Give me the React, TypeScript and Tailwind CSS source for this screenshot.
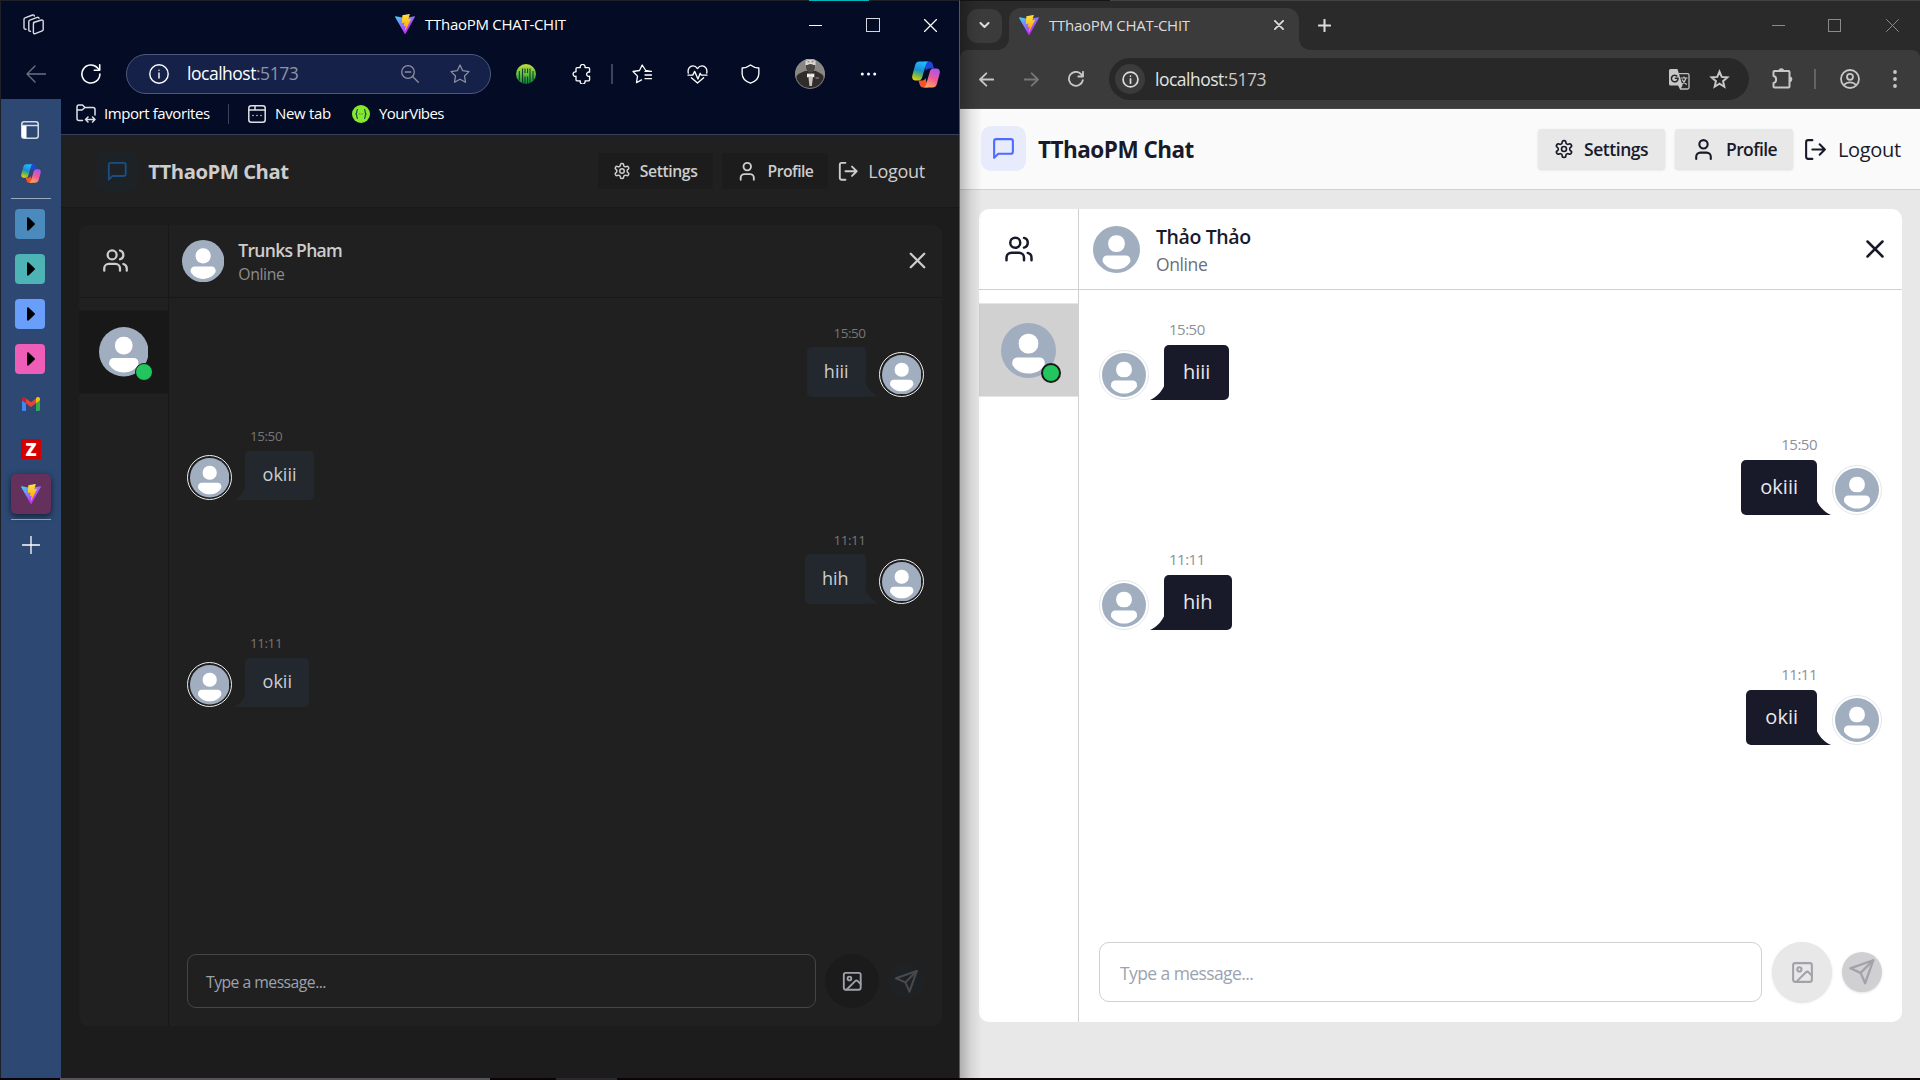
import React, { useId } from 'react';
import { Users, Image as ImageIcon, X, User } from 'lucide-react';

type IconProps = { className?: string; children?: React.ReactNode; box?: string; sw?: number };

const Line = ({ className = '', children, box = '0 0 20 20', sw = 1.2 }: IconProps) => (
  <svg viewBox={box} className={`shrink-0 ${className}`} fill="none" stroke="currentColor" strokeWidth={sw} strokeLinecap="round" strokeLinejoin="round">
    {children}
  </svg>
);

function ViteLogo({ className = '' }: { className?: string }) {
  const a = useId();
  const b = useId();
  return (
    <svg viewBox="0 0 256 257" className={`shrink-0 ${className}`}>
      <defs>
        <linearGradient id={a} x1="-.828%" x2="57.636%" y1="7.652%" y2="78.411%">
          <stop offset="0%" stopColor="#41D1FF" />
          <stop offset="100%" stopColor="#BD34FE" />
        </linearGradient>
        <linearGradient id={b} x1="43.376%" x2="50.316%" y1="2.242%" y2="89.03%">
          <stop offset="0%" stopColor="#FFEA83" />
          <stop offset="8.333%" stopColor="#FFDD35" />
          <stop offset="100%" stopColor="#FFA800" />
        </linearGradient>
      </defs>
      <path fill={`url(#${a})`} d="M255.153 37.938L134.897 252.976c-2.483 4.44-8.862 4.466-11.382.048L.875 37.958c-2.746-4.814 1.371-10.646 6.827-9.67l120.385 21.517a6.537 6.537 0 0 0 2.322-.004l117.867-21.483c5.438-.991 9.574 4.796 6.877 9.62Z" />
      <path fill={`url(#${b})`} d="M185.432.063L96.44 17.501a3.268 3.268 0 0 0-2.634 3.014l-5.474 92.456a3.268 3.268 0 0 0 3.997 3.378l24.777-5.718c2.318-.535 4.413 1.507 3.936 3.838l-7.361 36.047c-.495 2.426 1.782 4.5 4.151 3.78l15.304-4.649c2.372-.72 4.652 1.36 4.15 3.788l-11.698 56.621c-.732 3.542 3.979 5.473 5.943 2.437l1.313-2.028l72.516-144.72c1.215-2.423-.88-5.186-3.54-4.672l-25.505 4.922c-2.396.462-4.435-1.77-3.759-4.114l16.646-57.705c.677-2.35-1.37-4.583-3.769-4.113Z" />
    </svg>
  );
}

function Copilot({ className = '' }: { className?: string }) {
  const a = useId();
  const b = useId();
  return (
    <svg viewBox="0 0 28 27" className={`shrink-0 ${className}`}>
      <defs>
        <linearGradient id={a} x1="0.5" y1="0" x2="0.2" y2="1">
          <stop offset="0" stopColor="#22b8ff" />
          <stop offset="0.45" stopColor="#1a8fd0" />
          <stop offset="0.7" stopColor="#6cb84a" />
          <stop offset="1" stopColor="#f2cf10" />
        </linearGradient>
        <linearGradient id={b} x1="0.7" y1="0" x2="0.3" y2="1">
          <stop offset="0" stopColor="#a757f0" />
          <stop offset="0.5" stopColor="#ef5a96" />
          <stop offset="1" stopColor="#ffa55c" />
        </linearGradient>
      </defs>
      <path fill="#1b48d8" d="M12 0.5h5.500c2 0 2.800 1.200 3.300 2.900l1.200 4.100h-4.500c-2 0-3 1-3.500 2.500z" />
      <path fill="#f2552c" d="M16 26.500h-5c-2 0-2.800-1.200-3.300-2.900L6.500 19.500H10c2 0 3-1 3.500-2.500z" />
      <path fill={`url(#${a})`} d="M7.500 0.500h9c-1.500 0.500-2.300 2-2.900 4l-3.300 11.500c-0.600 2-1.600 3.500-3.800 3.500H3.600C0.800 19.500-0.300 17.500 0.300 14.500L3 4.500C3.700 2 5 0.500 7.500 0.500z" />
      <path fill={`url(#${b})`} d="M20.500 26.500h-9c1.500-0.500 2.300-2 2.900-4L17.700 11c0.600-2 1.600-3.500 3.800-3.500h2.900c2.800 0 3.900 2 3.300 5L25 22.500C24.300 25 23 26.500 20.500 26.500z" />
    </svg>
  );
}

const Gear = ({ className = '' }: { className?: string }) => (
  <Line box="0 0 24 24" sw={2} className={className}>
    <path d="M12.22 2h-.44a2 2 0 0 0-2 2v.18a2 2 0 0 1-1 1.730l-.43.25a2 2 0 0 1-2 0l-.15-.08a2 2 0 0 0-2.730.73l-.22.38a2 2 0 0 0 .73 2.730l.15.1a2 2 0 0 1 1 1.720v.51a2 2 0 0 1-1 1.740l-.15.09a2 2 0 0 0-.73 2.730l.22.38a2 2 0 0 0 2.730.73l.15-.08a2 2 0 0 1 2 0l.43.25a2 2 0 0 1 1 1.730V20a2 2 0 0 0 2 2h.44a2 2 0 0 0 2-2v-.18a2 2 0 0 1 1-1.730l.43-.25a2 2 0 0 1 2 0l.15.08a2 2 0 0 0 2.730-.73l.22-.39a2 2 0 0 0-.73-2.730l-.15-.08a2 2 0 0 1-1-1.740v-.5a2 2 0 0 1 1-1.740l.15-.09a2 2 0 0 0 .73-2.730l-.22-.38a2 2 0 0 0-2.730-.73l-.15.08a2 2 0 0 1-2 0l-.43-.25a2 2 0 0 1-1-1.730V4a2 2 0 0 0-2-2z" />
    <circle cx="12" cy="12" r="3" />
  </Line>
);

const Avatar = ({ className = '' }: { className?: string }) => (
  <svg viewBox="0 0 56 56" className={`shrink-0 ${className}`}>
    <circle cx="28" cy="28" r="28" fill="#a0aec0" />
    <rect x="18" y="11" width="20" height="20" rx="9.500" fill="#fff" />
    <path d="M17 35h22c3.500 0 5.500 2.200 5.500 5.500v2C41 48.500 35 51.500 28 51.500s-13-3-16.500-9v-2c0-3.300 2-5.500 5.500-5.500z" fill="#fff" />
  </svg>
);

type Theme = {
  page: string; header: string; headerPad: string; logo: string; title: string; btn: string; text: string; main: string;
  card: string; line: string; active: string; sub: string; time: string; bubble: string; bubbleText: string; tail: string;
  ring: string; input: string; imageBtn: string; sendBtn: string; dot: string; iconBtnColor: string;
};

const light: Theme = {
  page: 'w-[960px] h-[969px] bg-[#e8e8e8]',
  header: 'bg-[#fafafa] border-[#d2d2d4]',
  headerPad: 'pl-[21px] pr-[20px]',
  logo: 'bg-[#e8ebfc] text-[#4c6bff]',
  title: 'text-[#181a2a] pt-px',
  btn: 'bg-[#e8e8e8] shadow-sm',
  text: 'text-[#181a2a]',
  main: 'pl-[19px] pr-[18px]',
  card: 'h-[813px] bg-white',
  line: 'border-[#d0d0d0]',
  active: 'bg-[#d1d1d1] border-y border-[#e6e6e6]',
  sub: 'text-[#6d6e78]',
  time: 'text-[#8f9097]',
  bubble: 'bg-[#181a2a]',
  bubbleText: 'text-[#e8e9ee]',
  tail: 'text-[#181a2a]',
  ring: 'border-[#e5e6ea]',
  input: 'border-[#d0d0d2] text-[#9ca3af]',
  imageBtn: 'bg-[#e8e8e8] shadow-sm',
  sendBtn: 'bg-[#d0d0d3] text-[#a2a2aa] shadow-sm',
  dot: 'border-[#181818]',
  iconBtnColor: 'text-[#a2a2aa]',
};

const dark: Theme = {
  page: 'w-[999px] h-[1048px] bg-[#1c1c1c] [zoom:0.9]',
  header: 'bg-[#202020] border-[#181818]',
  headerPad: 'pl-[40px] pr-[40px] pt-px',
  logo: 'bg-[#1c2226] text-[#1c4e80]',
  title: 'text-[#cdcdcd]',
  btn: 'bg-[#1c1c1c]',
  text: 'text-[#cdcdcd]',
  main: 'pl-[20px] pr-[20px]',
  card: 'h-[890px] bg-[#202020]',
  line: 'border-[#181818]',
  active: 'bg-[#181818] border-y border-[#1b1b1b]',
  sub: 'text-[#8d8d8d]',
  time: 'text-[#767676]',
  bubble: 'bg-[#23282e]',
  bubbleText: 'text-[#cbcdd0]',
  tail: 'text-[#23282e]',
  ring: 'border-[#f0f0f0]',
  input: 'border-[#464646] text-[#9ca3af]',
  imageBtn: 'bg-[#1b1b1b]',
  sendBtn: 'bg-[#1f2224] text-[#48494b]',
  dot: 'border-[#181818]',
  iconBtnColor: 'text-[#a1a1aa]',
};

type Msg = { time: string; text: string; mine: boolean };

function Message({ m, t }: { m: Msg; t: Theme }) {
  return (
    <div className={`flex h-[80px] mb-[35px] items-end ${m.mine ? 'flex-row-reverse' : ''}`}>
      <div className={`w-[50px] h-[50px] shrink-0 rounded-full border p-[2px] ${t.ring}`}>
        <Avatar className="w-full h-full" />
      </div>
      <svg viewBox="0 0 14 15" className={`w-[14px] h-[15px] shrink-0 ${t.tail} ${m.mine ? '-scale-x-100 mr-px' : 'ml-px'}`}>
        <path d="M14.500 0C12 6.500 6 12.500 0 15h14.500z" fill="currentColor" />
      </svg>
      <div className={`flex flex-col ${m.mine ? 'items-end' : 'items-start'}`}>
        <div className={`h-[19px] mb-[6px] text-[15px] leading-[19px] tracking-[-0.5px] ${t.time} ${m.mine ? '' : 'ml-[5px]'}`}>{m.time}</div>
        <div className={`h-[55px] px-[19px] flex items-center rounded-[5px] text-[20px] leading-[25px] pb-[3px] ${m.mine ? 'rounded-br-none' : 'rounded-bl-none'} ${t.bubble} ${t.bubbleText}`}>{m.text}</div>
      </div>
    </div>
  );
}

function ChatPage({ t, name, nameTrack, messages }: { t: Theme; name: string; nameTrack: string; messages: Msg[] }) {
  return (
    <div className={`flex flex-col ${t.page}`}>
      <header className={`h-[81px] shrink-0 border-b flex items-center ${t.header} ${t.headerPad}`}>
        <div className={`w-[45px] h-[45px] rounded-[10px] flex items-center justify-center -mt-px ${t.logo}`}>
          <Line box="0 0 24 24" sw={2} className="w-[25px] h-[25px]">
            <path d="M21 15a2 2 0 0 1-2 2H7l-4 4V5a2 2 0 0 1 2-2h14a2 2 0 0 1 2 2z" />
          </Line>
        </div>
        <h1 className={`ml-[12px] text-[22.5px] font-bold tracking-[-0.52px] whitespace-nowrap ${t.title}`}>TThaoPM Chat</h1>
        <div className={`ml-auto flex items-center gap-[10px] text-[17.5px] ${t.text}`}>
          <div className={`h-[40px] px-[16px] flex items-center gap-[10px] rounded-[3px] font-semibold ${t.btn}`}>
            <Gear className="w-[20px] h-[20px]" />
            <span className="w-[65px] tracking-[-0.46px]">Settings</span>
          </div>
          <div className={`h-[40px] px-[16px] flex items-center gap-[10px] rounded-[3px] font-semibold ${t.btn}`}>
            <User className="w-[25px] h-[25px]" />
            <span className="w-[51px] tracking-[-0.6px]">Profile</span>
          </div>
          <div className="flex items-center gap-[10px]">
            <Line box="0 0 24 24" sw={2} className="w-[25px] h-[25px]">
              <path d="M9 21H5a2 2 0 0 1-2-2V5a2 2 0 0 1 2-2h4" />
              <path d="m16 17 5-5-5-5M21 12H9" />
            </Line>
            <span className="w-[62px] text-[20px] tracking-[-0.33px] pt-px">Logout</span>
          </div>
        </div>
      </header>
      <main className={`pt-[19px] ${t.main}`}>
        <div className={`flex rounded-[10px] overflow-hidden ${t.card}`}>
          <aside className={`w-[100px] shrink-0 border-r flex flex-col ${t.line}`}>
            <div className={`h-[81px] border-b pl-[25px] flex items-center ${t.line} ${t.text}`}>
              <Users className="w-[30px] h-[30px]" />
            </div>
            <div className={`mt-[13px] h-[94px] flex items-center justify-center ${t.active}`}>
              <div className="relative w-[55px] h-[55px]">
                <Avatar className="w-full h-full" />
                <span className={`absolute w-[20px] h-[20px] rounded-full bg-[#22c55e] border-[2px] right-[-5px] bottom-[-5px] ${t.dot}`} />
              </div>
            </div>
          </aside>
          <section className="flex-1 flex flex-col">
            <div className={`h-[81px] shrink-0 border-b pl-[14px] pr-[12px] flex items-center ${t.line}`}>
              <Avatar className="w-[47px] h-[47px]" />
              <div className="ml-[16px] pt-[2px] flex flex-col">
                <span className={`text-[19.5px] leading-[28px] font-semibold whitespace-nowrap ${nameTrack} ${t.text}`}>{name}</span>
                <span className={`text-[17.5px] leading-[26px] tracking-[-0.4px] ${t.sub}`}>Online</span>
              </div>
              <X className={`ml-auto w-[30px] h-[30px] ${t.text}`} />
            </div>
            <div className="flex-1 px-[20px] pt-[30px]">
              {messages.map((m, i) => <Message key={i} m={m} t={t} />)}
            </div>
            <div className="px-[20px] pb-[20px] flex items-center gap-[10px]">
              <div className={`flex-1 h-[60px] rounded-[10px] border px-[20px] flex items-center text-[17.5px] tracking-[-0.59px] pt-[3px] ${t.input}`}>Type a message...</div>
              <div className={`w-[60px] h-[60px] rounded-full flex items-center justify-center ${t.imageBtn} ${t.iconBtnColor}`}>
                <ImageIcon className="w-[25px] h-[25px]" />
              </div>
              <div className={`w-[40px] h-[40px] rounded-full flex items-center justify-center ${t.sendBtn}`}>
                <Line box="0 0 24 24" sw={2} className="w-[27.5px] h-[27.5px]">
                  <path d="m22 2-7 20-4-9-9-4Z" />
                  <path d="M22 2 11 13" />
                </Line>
              </div>
            </div>
          </section>
        </div>
      </main>
    </div>
  );
}

const thread: Msg[] = [
  { time: '15:50', text: 'hiii', mine: true },
  { time: '15:50', text: 'okiii', mine: false },
  { time: '11:11', text: 'hih', mine: true },
  { time: '11:11', text: 'okii', mine: false },
];
const mirrored = thread.map((m) => ({ ...m, mine: !m.mine }));

const groups = ['bg-[#4a8abc]', 'bg-[#4db3b5]', 'bg-[#699ffb]', 'bg-[#ee5db8]'];

function EdgeSidebar() {
  return (
    <nav className="w-[60px] h-full shrink-0 bg-[#2d4973] flex flex-col items-center text-white">
      <svg viewBox="0 0 18 18" className="mt-[22px] w-[18px] h-[18px] mr-[2px]">
        <rect x="0.75" y="0.75" width="16.500" height="16.500" rx="2.500" fill="none" stroke="#d5dbe5" strokeWidth="1.500" />
        <path d="M1 4.500h16" stroke="#d5dbe5" strokeWidth="1.500" />
        <path d="M1 5h4.500v12H3a2 2 0 0 1-2-2z" fill="#fff" />
      </svg>
      <Copilot className="mt-[25px] w-[20px] h-[19px]" />
      <div className="mt-[15px] w-[40px] h-px bg-[#9aa9c0]" />
      <div className="mt-[10px] flex flex-col gap-[15px] mr-[2px]">
        {groups.map((c) => (
          <div key={c} className={`w-[30px] h-[30px] rounded-[4px] flex items-center justify-center ${c}`}>
            <svg viewBox="0 0 8 14" className="w-[8px] h-[14px] ml-[2px]"><path d="M0 1.200C0 0.200 1 0 1.800 0.700L7.600 6.300a1 1 0 0 1 0 1.400L1.800 13.300C1 14 0 13.800 0 12.800z" fill="#000" /></svg>
          </div>
        ))}
      </div>
      <svg viewBox="0 0 18 14" className="mt-[23px] w-[18px] h-[14px]">
        <path d="M0 3v9.500C0 13.300.6 14 1.400 14H4V6z" fill="#4285f4" />
        <path d="M14 6v8h2.600c.8 0 1.400-.7 1.400-1.500V3z" fill="#34a853" />
        <path d="M14 1.500V6.200L18 3.200V2C18 .2 16-.7 14.500.4z" fill="#fbbc04" />
        <path d="M4 6.200V1.500L9 5.200l5-3.700v4.700L9 10z" fill="#ea4335" />
        <path d="M0 2v1.200l4 3V1.500L3.500.4C2-.7 0 .2 0 2z" fill="#c5221f" />
      </svg>
      <div className="mt-[28px] w-[20px] h-[20px] bg-[#d40000] flex items-center justify-center font-extrabold text-[18px] leading-[20px]">Z</div>
      <div className="mt-[15px] w-[40px] h-[40px] rounded-[5px] bg-[#64305c] shadow-[0_2px_6px_rgba(0,0,0,0.6)] flex items-center justify-center">
        <ViteLogo className="w-[20px] h-[20px]" />
      </div>
      <div className="mt-[5px] w-[40px] h-px bg-[#8f9fb8]" />
      <Line box="0 0 18 18" sw={1.300} className="mt-[16px] w-[18px] h-[18px] mr-px">
        <path d="M9 0.500v17M0.500 9h17" />
      </Line>
    </nav>
  );
}

function EdgeWindow() {
  return (
    <div className="w-[960px] h-[1078px] shrink-0 border-l border-t border-l-[#1d2026] border-t-[#1d2026] border-r border-r-[#55585e] bg-[#030c24] text-white flex flex-col relative">
      <div className="absolute left-[808px] top-[-1px] w-[60px] h-px bg-[#00b4c0]" />
      <div className="h-[47px] shrink-0 flex items-center pl-[22px] pt-px">
        <Line box="0 0 21 21" sw={1.400} className="w-[21px] h-[21px] -mt-[2px] text-[#d9dce2]">
          <path d="M10.500 8.500 18.500 6a1.300 1.300 0 0 1 1.700 1.300v8.200a1.500 1.500 0 0 1-1 1.400l-7 2.800a1.300 1.300 0 0 1-1.800-1.200v-8.500a1.500 1.500 0 0 1 1-1.500z" />
          <path d="M7.500 17.300c-1 .2-1.700-.4-1.700-1.300V7.500c0-.7.4-1.200 1-1.400l7.500-2.700c.9-.3 1.600.2 1.700 1" />
          <path d="M3 15.200c-1.100.3-2-.3-2-1.400V5.300c0-.7.4-1.200 1-1.400L9.600 1c.9-.3 1.600.2 1.800 1" />
        </Line>
        <ViteLogo className="ml-[351px] w-[20px] h-[20px] -mt-[2px]" />
        <span className="ml-[10px] w-[142px] text-[15px] tracking-[-0.28px] whitespace-nowrap -mt-[2px]">TThaoPM CHAT-CHIT</span>
        <div className="ml-[242px] w-[13px] h-px bg-white" />
        <div className="ml-[44px] w-[14px] h-[14px] border border-[#d5d7dc]" />
        <Line box="0 0 13 13" sw={1.200} className="ml-[44px] w-[13px] h-[13px]"><path d="M0.500 0.500l12 12M12.500 0.500l-12 12" /></Line>
      </div>
      <div className="h-[51px] shrink-0 flex items-center pl-[25px] pt-px">
        <Line box="0 0 20 18" sw={1.300} className="w-[20px] h-[18px] text-[#6b7283]"><path d="M19.500 9H1M9 1 1 9l8 8" /></Line>
        <Line box="0 0 20 20" sw={1.600} className="ml-[35px] w-[20px] h-[20px]"><path d="M18.900 10A9 9 0 1 1 16.600 4l2 2M18.700 0.800v5.400h-5.400" /></Line>
        <div className="ml-[25px] w-[365px] h-[40px] rounded-full border border-[#4d587c] bg-[#152148] flex items-center pl-[22px]">
          <Line box="0 0 20 20" sw={1.400} className="w-[20px] h-[20px]"><circle cx="10" cy="10" r="9.200" /><path d="M10 9v5M10 6.200v.1" /></Line>
          <span className="ml-[18px] w-[112px] text-[17.5px] tracking-[-0.48px] whitespace-nowrap -mt-[2px]">localhost<span className="text-[#8f94a5]">:5173</span></span>
          <Line box="0 0 18 18" sw={1.300} className="ml-[102px] w-[18px] h-[18px] text-[#8b90a0]"><circle cx="7" cy="7" r="6.300" /><path d="M11.800 11.800 17.300 17.300M4.200 7h5.600" /></Line>
          <Line box="0 0 20 20" sw={1.300} className="ml-[31px] w-[20px] h-[20px] text-[#8b90a0]"><path d="M10 1l2.700 5.700 6.300.9-4.500 4.400 1 6.300L10 15.300 4.500 18.300l1-6.300L1 7.600l6.300-.9z" /></Line>
        </div>
        <svg viewBox="0 0 20 20" className="ml-[25px] w-[20px] h-[20px] shrink-0">
          <defs><linearGradient id="hg" x1="0" y1="0" x2="0" y2="1"><stop offset="0" stopColor="#c3dc3c" /><stop offset="0.500" stopColor="#5cc043" /><stop offset="1" stopColor="#0e8a3c" /></linearGradient></defs>
          <circle cx="10" cy="10" r="10" fill="url(#hg)" />
          <path d="M3.300 7v9.500M6.600 4.500V19M9 4.500v4.500M9 12.500V20M11.600 4.500v4.500M11.600 12.500V20M14 4.500V19M17 7v9.500" stroke="#06211d" strokeWidth="0.900" />
        </svg>
        <Line box="0 0 20 20" sw={1.400} className="ml-[36px] w-[19px] h-[20px]"><path d="M18.500 4.500v3.600a2.300 2.300 0 1 0 0 4.300V16a1.300 1.300 0 0 1-1.300 1.300h-3.500a2.600 2.600 0 1 1-5 0H5.500A1.300 1.300 0 0 1 4.200 16v-3.600a2.400 2.400 0 1 1 0-4.600V4.500a1.300 1.300 0 0 1 1.300-1.300h3.200a2.600 2.600 0 1 1 5 0h3.500a1.300 1.300 0 0 1 1.300 1.300z" /></Line>
        <div className="ml-[20px] w-[2px] h-[20px] bg-[#3c4459]" />
        <Line box="0 0 20 20" sw={1.300} className="ml-[19px] w-[20px] h-[20px]"><path d="M18.800 7.300l-5-.8L10.200 1 7.500 6.500 1 7.500l4.500 4.600-1 6.600 5-2.800M13 11h6.500M13 7.300h6.500M13 14.700h6.500" /></Line>
        <Line box="0 0 22 20" sw={1.400} className="ml-[35px] w-[21px] h-[19px]"><path d="M1.300 8.500C0.300 4 3 1 6.200 1 8.500 1 10 2.200 11 3.700 12 2.200 13.500 1 15.800 1c3.200 0 5.900 3 4.900 7.500M4.500 13.500 11 19l6.500-5.500M1 10.700h5l2-4 3.500 8 2.300-6 1.200 2h6" /></Line>
        <Line box="0 0 20 21" sw={1.400} className="ml-[33px] w-[19px] h-[20px]"><path d="M10 1c2.500 2 5.500 3 8.800 3.200V10c0 5-3 8.200-8.800 10.200C4.200 18.200 1.200 15 1.200 10V4.200C4.500 4 7.500 3 10 1z" /></Line>
        <svg viewBox="0 0 30 30" className="ml-[35px] w-[30px] h-[30px] shrink-0">
          <defs><clipPath id="av"><circle cx="15" cy="15" r="15" /></clipPath></defs>
          <g clipPath="url(#av)">
            <rect width="30" height="30" fill="#8a8683" />
            <path d="M1 30V18c1-2.500 4-4 9-6h11c4 2 7 3.500 8 6v12z" fill="#2f2c2b" />
            <path d="M10.500 0h10v6c0 3.500-2.300 6-5 6s-5-2.500-5-6z" fill="#ddd8d2" />
            <path d="M10.800 6c1.700.5 2.700-1 4.700-1s3 1.500 4.700 1c.3 4-1.700 7.500-4.700 7.500S10.500 10 10.800 6z" fill="#4a4643" />
            <path d="M12.500 2.800h2M16.500 2.800h2" stroke="#55504d" strokeWidth="0.800" />
            <path d="M13 14.500h5.500L16.800 27h-2.300z" fill="#c9c5c0" />
            <path d="M12 14.500l3.700 1.500 3.600-1.500v4l-3.600-1.500-3.700 1.500z" fill="#f5f3ef" />
            <path d="M20.500 19h3.500" stroke="#b9b5b0" strokeWidth="0.800" />
            <circle cx="15" cy="15" r="14.600" fill="none" stroke="#8d8f96" strokeWidth="0.800" />
          </g>
        </svg>
        <svg viewBox="0 0 16 4" className="ml-[35px] w-[17px] h-[4px] shrink-0" fill="#fff"><circle cx="1.800" cy="2" r="1.500" /><circle cx="8" cy="2" r="1.500" /><circle cx="14.200" cy="2" r="1.500" /></svg>
        <Copilot className="ml-[35px] w-[28px] h-[27px]" />
      </div>
      <div className="flex-1 flex min-h-0">
        <EdgeSidebar />
        <div className="flex-1 flex flex-col min-w-0">
          <div className="h-[36px] shrink-0 border-b border-[#36405a] flex items-center pl-[15px] pb-[6px] text-[15px] whitespace-nowrap">
            <Line box="0 0 20 19" sw={1.500} className="w-[20px] h-[19px] text-[#dfe1e6]"><path d="M6.500 16.500H3a2 2 0 0 1-2-2V3a2 2 0 0 1 2-2h3.500l2.500 2.500H17a2 2 0 0 1 2 2V11M1 6h5l3-2.500M9.500 15.500h9.500M12 13l-2.500 2.500L12 18M16.500 13l2.500 2.500-2.500 2.500" /></Line>
            <span className="ml-[8px] w-[107px] tracking-[-0.42px] -mt-px">Import favorites</span>
            <div className="ml-[17px] w-px h-[20px] bg-[#3c4459]" />
            <Line box="0 0 18 18" sw={1.500} className="ml-[19px] w-[18px] h-[18px] text-[#dfe1e6]"><rect x="0.800" y="0.800" width="16.400" height="16.400" rx="2.500" /><path d="M1 5h16M7 1.500V5M5 10.500v.1M9 10.500v.1M13 10.500v.1" /></Line>
            <span className="ml-[9px] w-[57px] tracking-[-0.32px] -mt-px">New tab</span>
            <svg viewBox="0 0 18 18" className="ml-[20px] w-[18px] h-[18px] shrink-0">
              <circle cx="9" cy="9" r="9" fill="#85ea2d" />
              <path d="M6 4.500C4.500 4.500 5 6 4.800 7.300 4.600 8.500 4.500 8.800 3.600 9c.9.200 1 .5 1.200 1.700C5 12 4.500 13.500 6 13.500M12 4.500c1.500 0 1 1.500 1.200 2.800.2 1.200.3 1.500 1.200 1.700-.9.200-1 .5-1.200 1.700-.2 1.300.3 2.800-1.200 2.800M6.800 9h.6M8.700 9h.6M10.600 9h.6" stroke="#173647" strokeWidth="1.100" fill="none" />
            </svg>
            <span className="ml-[9px] tracking-[-0.6px] -mt-px">YourVibes</span>
          </div>
          <div className="overflow-hidden flex-1">
            <ChatPage t={dark} name="Trunks Pham" nameTrack="tracking-[-0.8px]" messages={thread} />
          </div>
        </div>
      </div>
    </div>
  );
}

function ChromeWindow() {
  return (
    <div className="w-[960px] h-[1078px] shrink-0 bg-[#2a2a2a] flex flex-col text-[#dcdcdc] relative">
      <div className="h-px flex shrink-0"><div className="w-[150px] bg-[#161616]" /><div className="flex-1 bg-[#424242]" /></div>
      <div className="h-[49px] shrink-0 flex items-center pl-[7px]">
        <div className="w-[35px] h-[34px] rounded-[11px] bg-[#3b3b3b] flex items-center justify-center">
          <Line box="0 0 10 7" sw={2} className="w-[11px] h-[7px]"><path d="M1 1l4 4 4-4" /></Line>
        </div>
        <div className="ml-[7px] h-full flex items-end pt-[7px]">
          <svg viewBox="0 0 12 12" className="w-[12px] h-[12px] -ml-[12px] shrink-0"><path d="M12 0v12H0C7 12 12 7 12 0z" fill="#3b3b3b" /></svg>
          <div className="w-[290px] h-[42px] rounded-t-[12px] bg-[#3b3b3b] flex items-center pl-[10px] pb-[8px]">
            <ViteLogo className="w-[20px] h-[20px]" />
            <span className="ml-[10px] w-[142px] text-[15px] tracking-[-0.28px] whitespace-nowrap">TThaoPM CHAT-CHIT</span>
            <Line box="0 0 10 10" sw={1.800} className="ml-[83px] w-[10px] h-[10px]"><path d="M0.900 0.900l8.200 8.200M9.100 0.900l-8.200 8.200" /></Line>
          </div>
          <svg viewBox="0 0 12 12" className="w-[12px] h-[12px] shrink-0"><path d="M0 0v12h12C5 12 0 7 0 0z" fill="#3b3b3b" /></svg>
        </div>
        <Line box="0 0 12 12" sw={1.900} className="ml-[7px] w-[13px] h-[13px]"><path d="M6 0.800v10.400M0.800 6h10.400" /></Line>
        <div className="ml-auto w-[13px] h-px bg-[#8a8a8a]" />
        <div className="ml-[43px] w-[13px] h-[13px] border border-[#8a8a8a]" />
        <Line box="0 0 13 13" sw={1} className="ml-[45px] mr-[21px] w-[13px] h-[13px] text-[#8a8a8a]"><path d="M0.500 0.500l12 12M12.500 0.500l-12 12" /></Line>
      </div>
      <div className="h-[59px] shrink-0 bg-[#3b3b3b] rounded-t-[8px] border-b border-[#474747] flex items-center pl-[19px]">
        <Line box="0 0 15 14" sw={1.800} className="w-[15px] h-[15px] text-[#c7c7c7]"><path d="M14.300 7H1M7.300 0.800 1 7l6.300 6.200" /></Line>
        <Line box="0 0 15 14" sw={1.800} className="ml-[30px] w-[15px] h-[15px] text-[#777]"><path d="M0.700 7H14M7.700 0.800 14 7l-6.300 6.200" /></Line>
        <Line box="0 0 16 16" sw={1.800} className="ml-[29px] w-[16px] h-[16px] text-[#c7c7c7]"><path d="M14.800 9.200A7 7 0 1 1 13.300 3.300L15 5.200M15 0.800v4.700h-4.700" /></Line>
        <div className="ml-[25px] w-[640px] h-[42px] rounded-full bg-[#282828] flex items-center pl-[6px]">
          <div className="w-[30px] h-[30px] rounded-full bg-[#3b3b3b] flex items-center justify-center">
            <Line box="0 0 16 16" sw={1.600} className="w-[17px] h-[17px]"><circle cx="8" cy="8" r="7" /><path d="M8 7.500v4M8 4.700v.1" /></Line>
          </div>
          <span className="ml-[10px] w-[112px] text-[17.5px] tracking-[-0.5px] whitespace-nowrap text-[#e3e3e3] pt-px">localhost<span className="text-[#c9c9c9]">:5173</span></span>
          <svg viewBox="0 0 21 21" className="ml-[402px] w-[21px] h-[21px] shrink-0">
            <path d="M10 4.700h8.500a1.500 1.500 0 0 1 1.500 1.500v12.300a1.500 1.500 0 0 1-1.500 1.500h-7L9.500 15" fill="none" stroke="#c0c0c0" strokeWidth="1.300" />
            <path d="M1.500 0h7l5 16.500h-12A1.500 1.500 0 0 1 0 15V1.500A1.500 1.500 0 0 1 1.500 0zM9 16.500h4.500L11.500 20z" fill="#c7c7c7" />
            <path d="M8.300 7.500A3.300 3.300 0 1 0 9 9.300H5.800" fill="none" stroke="#282828" strokeWidth="1.500" />
            <path d="M11.500 9h7M15 7.500V9M17 9c-.8 3-2.500 5-4 6.200M13.200 10.500c.8 2 2.300 3.800 4.600 5" fill="none" stroke="#c7c7c7" strokeWidth="1.200" />
          </svg>
          <Line box="0 0 20 20" sw={1.900} className="ml-[19px] w-[21px] h-[21px] text-[#c7c7c7]"><path strokeLinejoin="miter" d="M10 2.500l2.100 5 5.400.5-4.100 3.600 1.200 5.300L10 14l-4.600 2.900 1.200-5.300L2.500 8l5.400-.5z" /></Line>
        </div>
        <svg viewBox="0 0 21 21" className="ml-[23px] w-[21px] h-[21px] shrink-0 -mt-px">
          <path d="M2.500 3h14a1 1 0 0 1 1 1v14.500a1 1 0 0 1-1 1h-14a1 1 0 0 1-1-1V15c3.500-.5 3.500-6.500 0-7V4a1 1 0 0 1 1-1z" fill="none" stroke="#c7c7c7" strokeWidth="2" strokeLinejoin="round" />
          <path d="M6.500 3a2.800 2.800 0 0 1 5.600 0zM17.500 8.500a2.800 2.800 0 0 1 0 5.600z" fill="#c7c7c7" />
        </svg>
        <div className="ml-[21px] w-[2px] h-[20px] bg-[#636363]" />
        <Line box="0 0 20 20" sw={1.800} className="ml-[24px] w-[20px] h-[20px] text-[#c7c7c7]"><circle cx="10" cy="10" r="9" /><circle cx="10" cy="7.800" r="3" /><path d="M4 16c1.500-1.800 3.600-2.700 6-2.700s4.500.9 6 2.700" /></Line>
        <svg viewBox="0 0 4 18" className="ml-[33px] w-[4px] h-[18px] shrink-0" fill="#c7c7c7"><circle cx="2" cy="2" r="1.900" /><circle cx="2" cy="9" r="1.900" /><circle cx="2" cy="16" r="1.900" /></svg>
      </div>
      <ChatPage t={light} name="Thảo Thảo" nameTrack="tracking-[-0.4px]" messages={mirrored} />
      <div className="absolute left-0 top-0 w-[22px] h-full bg-gradient-to-r from-black/25 via-black/8 to-transparent pointer-events-none" />
    </div>
  );
}

export default function App() {
  return (
    <div className="w-[1920px] h-[1080px] overflow-hidden bg-[#0a0407] font-['Open_Sans','Noto_Sans',sans-serif]">
      <div className="flex h-[1078px]">
        <EdgeWindow />
        <ChromeWindow />
      </div>
      <div className="h-[2px] flex">
        <div className="ml-[60px] w-[430px] bg-[#565456]" />
        <div className="ml-[66px] w-[61px] bg-[#2a282a]" />
      </div>
    </div>
  );
}
